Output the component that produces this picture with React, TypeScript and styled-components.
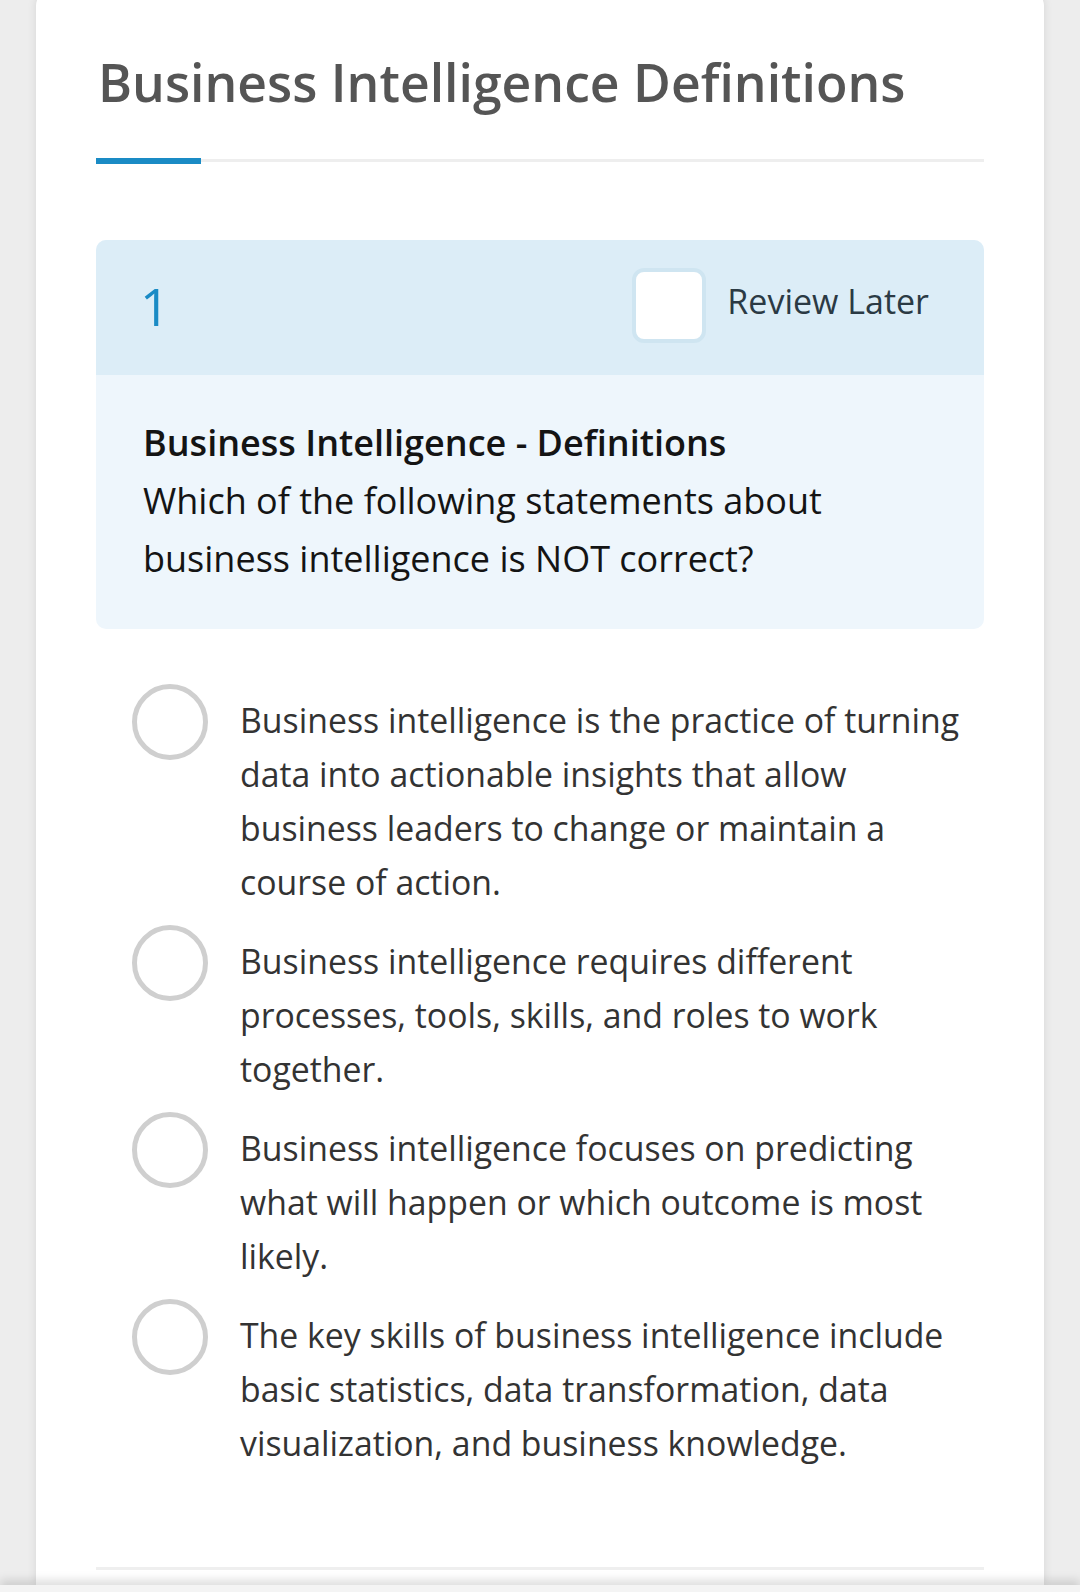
import React from "react";
import styled, { createGlobalStyle } from "styled-components";

const GlobalStyle = createGlobalStyle`
  html, body {
    margin: 0;
    padding: 0;
    background: #ededed;
    font-family: "Open Sans", "Noto Sans", "Liberation Sans", sans-serif;
    overflow: hidden;
  }
`;

const Page = styled.div`
  display: flex;
  flex-direction: column;
  min-height: 1592px;
`;

const Card = styled.div`
  margin: -10px 36px 0 36px;
  padding: 58px 60px 15px 60px;
  background: #fff;
  border-radius: 16px 16px 0 0;
  box-shadow: 0 0 10px rgba(0, 0, 0, 0.1);
`;

const Title = styled.h1`
  margin: 0;
  font-size: 51.7px;
  line-height: 69px;
  font-weight: 600;
  color: #555;
  padding-left: 2px;
`;

const Track = styled.div`
  display: flex;
  align-items: flex-start;
  margin-top: 41px;
  height: 7px;
`;

const TrackDone = styled.div`
  width: 105px;
  height: 6px;
  background: #1a8bc5;
`;

const TrackRest = styled.div`
  flex: 1;
  height: 3px;
  margin-top: 1px;
  background: #eeeeee;
`;

const QuestionBox = styled.section`
  margin-top: 75px;
  border-radius: 10px;
  overflow: hidden;
  background: #eef6fc;
`;

const QuestionHead = styled.div`
  height: 135px;
  box-sizing: border-box;
  display: flex;
  align-items: flex-start;
  justify-content: space-between;
  padding: 0 55px 0 44px;
  background: #dcedf7;
`;

const Number = styled.span`
  margin-top: 40px;
  font-size: 52px;
  line-height: 1;
  font-weight: 500;
  color: #1a8bc5;
`;

const ReviewLabel = styled.label`
  display: flex;
  align-items: flex-start;
  gap: 21px;
  margin-top: 28px;
`;

const CheckBox = styled.span`
  width: 66px;
  height: 67px;
  border: 4px solid #cfe5f1;
  border-radius: 12px;
  background: #fff;
`;

const ReviewText = styled.span`
  margin-top: 16px;
  font-size: 34px;
  line-height: 1;
  color: #2b3a44;
`;

const QuestionBody = styled.div`
  padding: 39px 47px 41px 47px;
  font-size: 36px;
  line-height: 58px;
  color: #141414;
`;

const QuestionTopic = styled.div`
  font-weight: 600;
`;

const Options = styled.ul`
  list-style: none;
  margin: 55px 0 0 0;
  padding: 0 0 0 36px;
  display: flex;
  flex-direction: column;
  gap: 16px;
`;

const Option = styled.li`
  display: flex;
  align-items: flex-start;
  gap: 32px;
`;

const Radio = styled.span`
  flex: none;
  width: 66px;
  height: 66px;
  border: 5px solid #cfcfcf;
  border-radius: 50%;
`;

const OptionText = styled.span`
  flex: 1;
  padding-top: 9px;
  font-size: 33.8px;
  line-height: 54px;
  color: #333;
`;

const Divider = styled.hr`
  margin: 97px 0 0 0;
  border: 0;
  height: 3px;
  background: #efefef;
`;

const BottomBar = styled.div`
  height: 60px;
  background: #f4f4f4;
  box-shadow: 0 -5px 9px rgba(0, 0, 0, 0.13);
  position: relative;
`;

const answers = [
  "Business intelligence is the practice of turning data into actionable insights that allow business leaders to change or maintain a course of action.",
  "Business intelligence requires different processes, tools, skills, and roles to work together.",
  "Business intelligence focuses on predicting what will happen or which outcome is most likely.",
  "The key skills of business intelligence include basic statistics, data transformation, data visualization, and business knowledge.",
];

export default function App() {
  return (
    <>
      <GlobalStyle />
      <Page>
        <Card>
          <Title>Business Intelligence Definitions</Title>
          <Track>
            <TrackDone />
            <TrackRest />
          </Track>

          <QuestionBox>
            <QuestionHead>
              <Number>1</Number>
              <ReviewLabel>
                <CheckBox />
                <ReviewText>Review Later</ReviewText>
              </ReviewLabel>
            </QuestionHead>
            <QuestionBody>
              <QuestionTopic>Business Intelligence - Definitions</QuestionTopic>
              Which of the following statements about business intelligence is NOT correct?
            </QuestionBody>
          </QuestionBox>

          <Options>
            {answers.map((a) => (
              <Option key={a}>
                <Radio />
                <OptionText>{a}</OptionText>
              </Option>
            ))}
          </Options>

          <Divider />
        </Card>
        <BottomBar />
      </Page>
    </>
  );
}
